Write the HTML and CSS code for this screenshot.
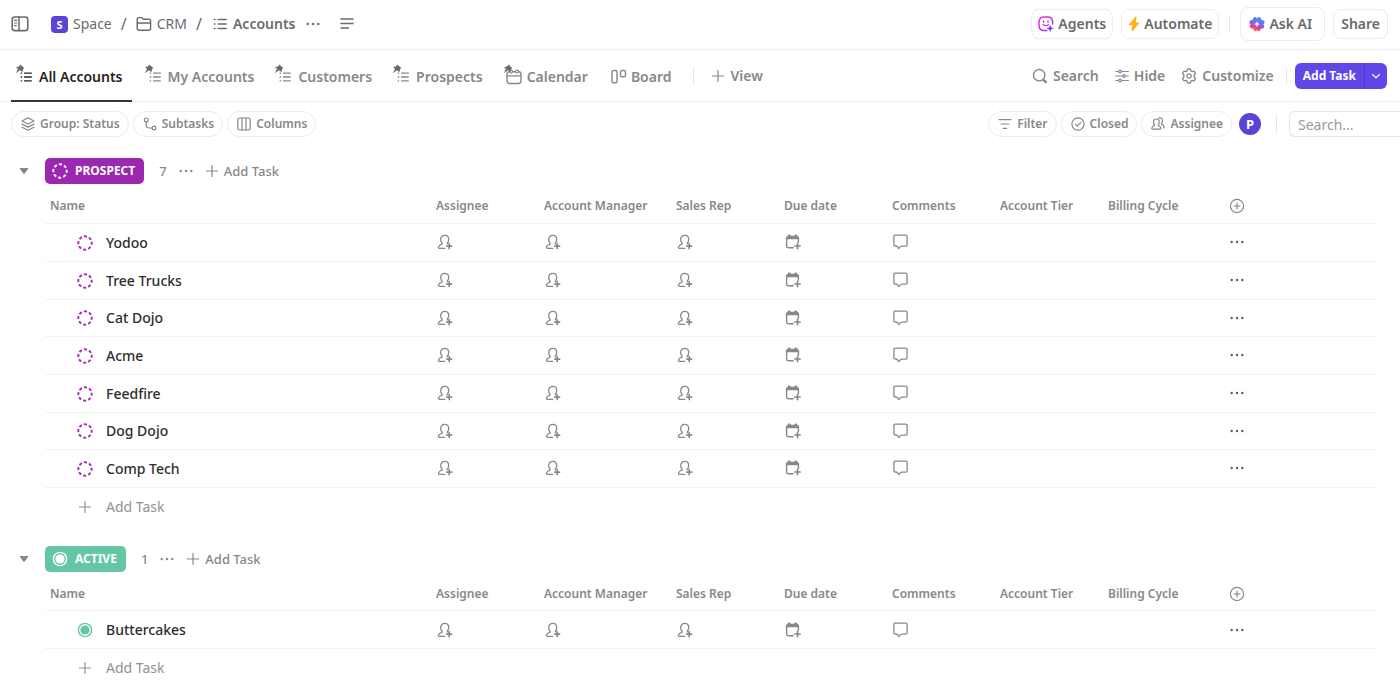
FILE: index.html
```html
<!DOCTYPE html>
<html lang="en">
<head>
<meta charset="utf-8">
<title>Accounts</title>
<link rel="stylesheet" href="styles.css">
</head>
<body>
<svg class="sprite" aria-hidden="true">
  <defs>
    <linearGradient id="agent-grad" x1="0" y1="0" x2="1" y2="1"><stop offset="0" stop-color="#fb2fd9"/><stop offset="1" stop-color="#8a35f0"/></linearGradient>
    <linearGradient id="ai-grad" x1="0.7" y1="0" x2="0.35" y2="1"><stop offset="0" stop-color="#2f9bff"/><stop offset="0.5" stop-color="#8a5cf0"/><stop offset="0.75" stop-color="#f2389a"/><stop offset="1" stop-color="#ff8a1f"/></linearGradient>
  </defs>
  <symbol id="list" viewBox="0 0 14 14"><path d="M5.200 2.500h8M5.200 7h8M5.200 11.500h8" stroke-width="1.500"/><path d="M1.300 2.500h.6M1.300 7h.6M1.300 11.500h.6" stroke-width="1.600"/></symbol>
  <symbol id="pin" viewBox="0 0 10 10"><path d="M5.400.6 9.400 4.200 8.100 5 7.500 8.200 5 6.300.8 9.200 3.100 4.800.9 3.400 4.200 2.300Z" fill="currentColor" stroke="none"/></symbol>
  <symbol id="dots" viewBox="0 0 14 4"><g fill="currentColor" stroke="none"><circle cx="1.700" cy="2" r="1.200"/><circle cx="7" cy="2" r="1.200"/><circle cx="12.300" cy="2" r="1.200"/></g></symbol>
  <symbol id="plus" viewBox="0 0 12 12"><path d="M6 .5v11M.5 6h11" stroke-width="1.200"/></symbol>
  <symbol id="person" viewBox="0 0 16 16"><path d="M7.700 14.300H2.500c-.9 0-1.300-.6-1-1.400.5-1.200 1.500-2 2.900-2.500.9-.3 1-.9.500-1.500-.8-1-1.200-2.200-1.200-3.500 0-2.400 1.700-4.100 4-4.100s4 1.700 4 4.100c0 1.200-.4 2.400-1.200 3.400-.3.400-.4.800-.2 1.100" stroke-width="1.300"/><path d="M12.200 9.700v4.800M9.800 12.100h4.800" stroke-width="1.700"/></symbol>
  <symbol id="date" viewBox="0 0 16 16"><path d="M.9 5.200V3.800c0-1 .7-1.600 1.600-1.600.2-1.300.9-1.700 1.700-1.700s1.400.4 1.700 1.200h3.200c.3-.8.900-1.200 1.700-1.200s1.500.4 1.700 1.700c1 0 1.600.600 1.600 1.600v1.400Z" fill="currentColor" stroke="none"/><path d="M1.600 4.500v7.600c0 1 .6 1.700 1.700 1.700h4.900M13.400 4.500v3.700" stroke-width="1.400"/><path d="M12.500 9.400v5.200M9.900 12h5.200" stroke-width="1.700"/></symbol>
  <symbol id="comment" viewBox="0 0 16 16"><path d="M2.200 1.200h10.600c.8 0 1.300.5 1.300 1.300v8.300c0 .8-.5 1.300-1.300 1.300H9c-1 .1-1.700.5-2.300 1.200l-1 1.300-.9-1.300c-.4-.7-.9-1.200-1.700-1.300h-.9c-.8 0-1.300-.5-1.300-1.300V2.500c0-.8.500-1.300 1.300-1.300Z" stroke-width="1.300"/></symbol>
  <symbol id="dashed" viewBox="0 0 16 16"><circle cx="8" cy="8" r="6.700" stroke-width="1.900" stroke-linecap="butt" stroke-dasharray="3.100 2.160" transform="rotate(-11 8 8)"/></symbol>
  <symbol id="active" viewBox="0 0 16 16"><circle cx="8" cy="8" r="6.600" stroke-width="1.400"/><circle cx="8" cy="8" r="4.600" fill="currentColor" stroke="none"/></symbol>
  <symbol id="caret" viewBox="0 0 10 8"><path d="M1.500 1h7c.7 0 .9.600.5 1.100L5.700 6.500c-.4.500-1 .500-1.400 0L1 2.100C.6 1.600.8 1 1.500 1Z" fill="currentColor" stroke="none"/></symbol>
  <symbol id="add-col" viewBox="0 0 16 16"><circle cx="8" cy="8" r="6.600"/><path d="M8 5v6M5 8h6"/></symbol>
</svg>

<div class="app">
  <header class="topbar">
    <nav class="crumbs" aria-label="Breadcrumb">
      <button class="plain panel-toggle" aria-label="Toggle sidebar"><svg class="i18" viewBox="0 0 18 18"><rect x="1.200" y="2" width="15.600" height="13.600" rx="2.600" stroke-width="1.600"/><path d="M8 2v13.600" stroke-width="1.500"/><path d="M3.500 5.300h2.300M3.500 8h2.300M3.500 10.700h1.600" stroke-width="1.200"/></svg></button>
      <a class="crumb" href="#"><span class="space-mark">S</span>Space</a>
      <span class="slash">/</span>
      <a class="crumb" href="#"><svg class="i16" viewBox="0 0 16 16"><path d="M1.200 12.300V3.500c0-1.200.7-1.900 1.900-1.900h2.300c.6 0 1 .2 1.300.7l.7 1h5.300c1.200 0 1.900.7 1.900 1.900v7.100c0 1.200-.7 1.900-1.900 1.900H3.100c-1.200 0-1.900-.7-1.900-1.900ZM1.400 7h13.200" stroke-width="1.400"/></svg>CRM</a>
      <span class="slash">/</span>
      <a class="crumb current" href="#" aria-current="page"><svg class="i14"><use href="#list"/></svg>Accounts</a>
      <button class="plain" aria-label="More"><svg class="dots"><use href="#dots"/></svg></button>
      <button class="plain outline" aria-label="Description"><svg class="i14" viewBox="0 0 14 14"><path d="M1 2.100h12M1 6.500h12M1 10.900h7.500" stroke-width="1.500"/></svg></button>
    </nav>
    <div class="actions">
      <button class="box"><svg class="i16" viewBox="0 0 16 16"><path d="M8.800 14.600H6C3 14.600 1 12.600 1 9.600V6c0-3 2-5 5-5h3.600c3 0 5 2 5 5v2" stroke="url(#agent-grad)" stroke-width="1.500"/><path d="M5.500 5v1.300M10 5v1.300M5 8.500c.8 1.400 4.800 1.400 5.600 0" stroke="#c631e4" stroke-width="1.300"/><path d="M12.200 8.800 13.200 11.300 15.800 12.400 13.200 13.400 12.200 16 11.100 13.400 8.500 12.400 11.100 11.300Z" fill="#8a35f0" stroke="none"/></svg>Agents</button>
      <button class="box"><svg class="bolt" viewBox="0 0 12 16"><path d="M7.400.8 1 8.300c-.4.500-.2 1 .5 1h2.700L3.600 14.500c-.1.800.5 1 1 .4L11 7.600c.4-.5.2-1-.5-1H8L8.500 1.200C8.600.4 7.900.2 7.400.8Z" fill="#ffb01f" stroke="none"/></svg>Automate</button>
      <span class="rule"></span>
      <button class="box ask"><svg class="i16" viewBox="0 0 16 16"><g fill="url(#ai-grad)" stroke="none"><path fill-rule="evenodd" d="M8 2.700C8.800.2 12.300.4 12.300 4 15.900 3.600 16.700 7 14.200 8.300 16.400 10.300 14.900 13.300 11.800 12.600 11.500 15.900 8.500 16 8 13.800 7.500 16 4.500 15.900 4.200 12.600 1.100 13.300-.4 10.300 1.800 8.300-.7 7 .1 3.600 3.700 4 3.700.4 7.200.2 8 2.700ZM8 4.700C7.500 7 7 7.500 4.700 8 7 8.500 7.500 9 8 11.300 8.500 9 9 8.500 11.300 8 9 7.500 8.500 7 8 4.700Z"/></g></svg>Ask AI</button>
      <button class="box share">Share</button>
    </div>
  </header>

  <div class="viewbar">
    <nav class="tabs" aria-label="Views">
      <a class="tab selected" href="#" aria-current="page"><span class="slot"><svg class="pin"><use href="#pin"/></svg><svg class="i12"><use href="#list"/></svg></span>All Accounts</a>
      <a class="tab" href="#"><span class="slot"><svg class="pin"><use href="#pin"/></svg><svg class="i12"><use href="#list"/></svg></span>My Accounts</a>
      <a class="tab" href="#"><span class="slot"><svg class="pin"><use href="#pin"/></svg><svg class="i12"><use href="#list"/></svg></span>Customers</a>
      <a class="tab" href="#"><span class="slot"><svg class="pin"><use href="#pin"/></svg><svg class="i12"><use href="#list"/></svg></span>Prospects</a>
      <a class="tab" href="#"><span class="slot calendar"><svg class="pin"><use href="#pin"/></svg><svg class="i16" viewBox="0 0 16 16"><rect x="1" y="2.800" width="14" height="11.700" rx="2.400" stroke-width="1.400"/><path d="M1 6.800h14"/><circle cx="5" cy="2.600" r="1.500" fill="#fff"/><circle cx="11" cy="2.600" r="1.500" fill="#fff"/></svg></span>Calendar</a>
      <a class="tab board" href="#"><svg class="i16" viewBox="0 0 16 16"><rect x="1" y="1.500" width="5" height="12.300" rx="1.600" stroke-width="1.400"/><rect x="9.500" y="1.500" width="5" height="6.300" rx="1.600" stroke-width="1.400"/></svg>Board</a>
      <span class="rule"></span>
      <button class="plain view-add"><svg class="i12"><use href="#plus"/></svg>View</button>
    </nav>
    <div class="tools">
      <button class="plain"><svg class="i16" viewBox="0 0 16 16"><circle cx="7.200" cy="7.200" r="5.700" stroke-width="1.400"/><path d="m12 12.500 1.800 1.500" stroke-width="2.400"/></svg>Search</button>
      <button class="plain"><svg class="i14" viewBox="0 0 14 14"><path d="M.8 2.500h2.600M6.600 2.500h6.700M.8 7h6.500M10.600 7h2.700M.8 11.500h2.600M6.600 11.500h6.700"/><circle cx="5" cy="2.500" r="1.300"/><circle cx="9" cy="7" r="1.300"/><circle cx="5" cy="11.500" r="1.300"/></svg>Hide</button>
      <button class="plain"><svg class="i16" viewBox="0 0 16 16"><path d="M6.600 1h2.800l.5 1.900 1.300.7 1.900-.5 1.400 2.400L13.100 7v2l1.400 1.500-1.400 2.400-1.900-.5-1.300.7-.5 1.900H6.600l-.5-1.900-1.300-.7-1.900.5-1.400-2.400L2.900 9V7L1.500 5.500l1.400-2.400 1.900.5 1.300-.7Z" stroke-width="1.300"/><circle cx="8" cy="8" r="2.200"/></svg>Customize</button>
      <span class="rule"></span>
      <div class="split"><button class="primary">Add Task</button><button class="primary more" aria-label="More task types"><svg class="i10" viewBox="0 0 10 10"><path d="m1.500 3.500 3.500 3.300 3.500-3.300"/></svg></button></div>
    </div>
  </div>

  <div class="filterbar">
    <div class="pills">
      <button class="pill"><svg class="i14" viewBox="0 0 14 14"><path d="M7 .8 13 4 7 7 1 4ZM1 7.100l6 3 6-3M1 10.200l6 3 6-3"/></svg>Group: Status</button>
      <button class="pill"><svg class="i14" viewBox="0 0 14 14"><circle cx="3.200" cy="2.900" r="1.900"/><circle cx="11" cy="11" r="1.900"/><path d="M3.200 5v2.800c0 2 1.200 3.200 3.200 3.200H9"/></svg>Subtasks</button>
      <button class="pill"><svg class="i14" viewBox="0 0 14 14"><rect x=".8" y="1" width="12.400" height="12" rx="2.200"/><path d="M5 1v12M9 1v12"/></svg>Columns</button>
    </div>
    <div class="pills">
      <button class="pill"><svg class="i14" viewBox="0 0 14 14"><path d="M1 2.600h12M3 7h8M5.400 11.400h3.200"/></svg>Filter</button>
      <button class="pill"><svg class="i14" viewBox="0 0 14 14"><circle cx="7" cy="7" r="6.100"/><path d="m4.300 7.200 1.900 1.900L9.800 5.300"/></svg>Closed</button>
      <button class="pill"><svg class="i14" viewBox="0 0 14 14"><path d="M5.400 2C7.400 2 8.300 3.400 8.300 5c0 1-.4 1.900-1 2.700-.3.400-.2.800.3.900 1.200.4 2.100 1.300 2.300 2.600.1.500-.2.900-.7.900H1.500c-.5 0-.8-.4-.7-.9.300-1.300 1.200-2.200 2.400-2.600.5-.1.600-.5.300-.9-.7-.8-1-1.700-1-2.700 0-1.600.9-3 2.900-3Z"/><path d="M7.500 1C10 .2 11.500 1.700 11.500 3.900c0 1-.3 1.800-.9 2.600-.3.400-.2.700.2.900 1.100.4 2 1.300 2.300 2.500.1.500-.2.900-.7.900"/></svg>Assignee</button>
      <button class="avatar" aria-label="P">P</button>
      <span class="rule"></span>
      <input class="search" type="search" placeholder="Search..." aria-label="Search tasks">
    </div>
  </div>

  <main class="groups">
    <section class="group">
      <div class="group-head">
        <button class="plain fold" aria-label="Collapse Prospect"><svg class="i10"><use href="#caret"/></svg></button>
        <button class="status prospect"><svg class="i16"><use href="#dashed"/></svg>PROSPECT</button>
        <span class="count">7</span>
        <button class="plain" aria-label="Group menu"><svg class="dots"><use href="#dots"/></svg></button>
        <button class="plain head-add"><svg class="i12"><use href="#plus"/></svg>Add Task</button>
      </div>
      <table class="tasks">
        <colgroup><col class="c-name"><col class="c-std"><col class="c-wide"><col class="c-std"><col class="c-std"><col class="c-std"><col class="c-std"><col class="c-std"><col class="c-menu"><col></colgroup>
        <thead><tr><th>Name</th><th>Assignee</th><th>Account Manager</th><th>Sales Rep</th><th>Due date</th><th>Comments</th><th>Account Tier</th><th>Billing Cycle</th><th class="menu"><button class="plain" aria-label="Add column"><svg class="i16"><use href="#add-col"/></svg></button></th><th></th></tr></thead>
        <tbody>
          <tr><td><a class="task prospect-mark" href="#"><svg class="i16"><use href="#dashed"/></svg>Yodoo</a></td><td><svg class="i16"><use href="#person"/></svg></td><td><svg class="i16"><use href="#person"/></svg></td><td><svg class="i16"><use href="#person"/></svg></td><td><svg class="i16"><use href="#date"/></svg></td><td><svg class="i16"><use href="#comment"/></svg></td><td></td><td></td><td class="menu"><button class="plain" aria-label="Task menu"><svg class="dots"><use href="#dots"/></svg></button></td><td></td></tr>
          <tr><td><a class="task prospect-mark" href="#"><svg class="i16"><use href="#dashed"/></svg>Tree Trucks</a></td><td><svg class="i16"><use href="#person"/></svg></td><td><svg class="i16"><use href="#person"/></svg></td><td><svg class="i16"><use href="#person"/></svg></td><td><svg class="i16"><use href="#date"/></svg></td><td><svg class="i16"><use href="#comment"/></svg></td><td></td><td></td><td class="menu"><button class="plain" aria-label="Task menu"><svg class="dots"><use href="#dots"/></svg></button></td><td></td></tr>
          <tr><td><a class="task prospect-mark" href="#"><svg class="i16"><use href="#dashed"/></svg>Cat Dojo</a></td><td><svg class="i16"><use href="#person"/></svg></td><td><svg class="i16"><use href="#person"/></svg></td><td><svg class="i16"><use href="#person"/></svg></td><td><svg class="i16"><use href="#date"/></svg></td><td><svg class="i16"><use href="#comment"/></svg></td><td></td><td></td><td class="menu"><button class="plain" aria-label="Task menu"><svg class="dots"><use href="#dots"/></svg></button></td><td></td></tr>
          <tr><td><a class="task prospect-mark" href="#"><svg class="i16"><use href="#dashed"/></svg>Acme</a></td><td><svg class="i16"><use href="#person"/></svg></td><td><svg class="i16"><use href="#person"/></svg></td><td><svg class="i16"><use href="#person"/></svg></td><td><svg class="i16"><use href="#date"/></svg></td><td><svg class="i16"><use href="#comment"/></svg></td><td></td><td></td><td class="menu"><button class="plain" aria-label="Task menu"><svg class="dots"><use href="#dots"/></svg></button></td><td></td></tr>
          <tr><td><a class="task prospect-mark" href="#"><svg class="i16"><use href="#dashed"/></svg>Feedfire</a></td><td><svg class="i16"><use href="#person"/></svg></td><td><svg class="i16"><use href="#person"/></svg></td><td><svg class="i16"><use href="#person"/></svg></td><td><svg class="i16"><use href="#date"/></svg></td><td><svg class="i16"><use href="#comment"/></svg></td><td></td><td></td><td class="menu"><button class="plain" aria-label="Task menu"><svg class="dots"><use href="#dots"/></svg></button></td><td></td></tr>
          <tr><td><a class="task prospect-mark" href="#"><svg class="i16"><use href="#dashed"/></svg>Dog Dojo</a></td><td><svg class="i16"><use href="#person"/></svg></td><td><svg class="i16"><use href="#person"/></svg></td><td><svg class="i16"><use href="#person"/></svg></td><td><svg class="i16"><use href="#date"/></svg></td><td><svg class="i16"><use href="#comment"/></svg></td><td></td><td></td><td class="menu"><button class="plain" aria-label="Task menu"><svg class="dots"><use href="#dots"/></svg></button></td><td></td></tr>
          <tr><td><a class="task prospect-mark" href="#"><svg class="i16"><use href="#dashed"/></svg>Comp Tech</a></td><td><svg class="i16"><use href="#person"/></svg></td><td><svg class="i16"><use href="#person"/></svg></td><td><svg class="i16"><use href="#person"/></svg></td><td><svg class="i16"><use href="#date"/></svg></td><td><svg class="i16"><use href="#comment"/></svg></td><td></td><td></td><td class="menu"><button class="plain" aria-label="Task menu"><svg class="dots"><use href="#dots"/></svg></button></td><td></td></tr>
        </tbody>
      </table>
      <button class="plain row-add"><svg class="i12"><use href="#plus"/></svg>Add Task</button>
    </section>

    <section class="group">
      <div class="group-head">
        <button class="plain fold" aria-label="Collapse Active"><svg class="i10"><use href="#caret"/></svg></button>
        <button class="status active"><svg class="i16"><use href="#active"/></svg>ACTIVE</button>
        <span class="count">1</span>
        <button class="plain" aria-label="Group menu"><svg class="dots"><use href="#dots"/></svg></button>
        <button class="plain head-add"><svg class="i12"><use href="#plus"/></svg>Add Task</button>
      </div>
      <table class="tasks">
        <colgroup><col class="c-name"><col class="c-std"><col class="c-wide"><col class="c-std"><col class="c-std"><col class="c-std"><col class="c-std"><col class="c-std"><col class="c-menu"><col></colgroup>
        <thead><tr><th>Name</th><th>Assignee</th><th>Account Manager</th><th>Sales Rep</th><th>Due date</th><th>Comments</th><th>Account Tier</th><th>Billing Cycle</th><th class="menu"><button class="plain" aria-label="Add column"><svg class="i16"><use href="#add-col"/></svg></button></th><th></th></tr></thead>
        <tbody>
          <tr><td><a class="task active-mark" href="#"><svg class="i16"><use href="#active"/></svg>Buttercakes</a></td><td><svg class="i16"><use href="#person"/></svg></td><td><svg class="i16"><use href="#person"/></svg></td><td><svg class="i16"><use href="#person"/></svg></td><td><svg class="i16"><use href="#date"/></svg></td><td><svg class="i16"><use href="#comment"/></svg></td><td></td><td></td><td class="menu"><button class="plain" aria-label="Task menu"><svg class="dots"><use href="#dots"/></svg></button></td><td></td></tr>
        </tbody>
      </table>
      <button class="plain row-add"><svg class="i12"><use href="#plus"/></svg>Add Task</button>
    </section>
  </main>
</div>
</body>
</html>
```
FILE: styles.css
```css
* { box-sizing: border-box; }

body {
  margin: 0;
  background: #fff;
  color: #888;
  font: 500 14px/20px "Noto Sans", "Open Sans", sans-serif;
}

a { color: inherit; text-decoration: none; }

button, input { font: inherit; color: inherit; }

button {
  display: flex;
  align-items: center;
  margin: 0;
  padding: 0;
  border: 0;
  background: none;
  white-space: nowrap;
}

svg {
  display: block;
  flex: none;
  fill: none;
  stroke: currentColor;
  stroke-width: 1.2;
  stroke-linecap: round;
  stroke-linejoin: round;
}

.sprite { position: absolute; width: 0; height: 0; }
.i10 { width: 10px; height: 10px; }
.i12 { width: 12px; height: 12px; }
.i14 { width: 14px; height: 14px; }
.i16 { width: 16px; height: 16px; }
.i18 { width: 18px; height: 18px; }
.dots { width: 14px; height: 4px; }
.pin { width: 10px; height: 10px; }
.bolt { width: 12px; height: 16px; }

.rule { width: 1px; height: 16px; background: #e4e4e4; }

.app {
  display: flex;
  flex-direction: column;
  height: 100vh;
  overflow: hidden;
}

.topbar, .viewbar, .filterbar {
  display: flex;
  align-items: center;
  justify-content: space-between;
  flex: none;
}

/* Top bar */
.topbar {
  height: 50px;
  padding: 0 12px 1px 11px;
  border-bottom: 1px solid #ececec;
  color: #6b6b6b;
}

.crumbs, .actions { display: flex; align-items: center; gap: 8px; }
.panel-toggle { margin-right: 14px; }
.crumb { display: flex; align-items: center; gap: 5px; font-weight: 400; }
.crumb.current { gap: 6px; font-weight: 600; margin-left: 2px; }
.slash { font-size: 16px; font-weight: 400; padding: 0 1px; }
.crumbs .dots { margin: 0 2px; }
.outline { margin-left: 10px; }

.space-mark {
  width: 17px;
  height: 17px;
  border-radius: 4px;
  background: #5a43d6;
  color: #fff;
  font-size: 11px;
  font-weight: 700;
  line-height: 17px;
  text-align: center;
}

.box {
  gap: 4px;
  height: 30px;
  padding: 0 6px;
  border: 1px solid #ececec;
  border-radius: 8px;
  font-weight: 600;
}
.share { padding: 0 7px; }
.actions .rule { margin: 0 2px; }
.ask { height: 34px; padding: 0 12px 0 8px; }

/* Views */
.viewbar {
  height: 52px;
  padding: 0 13px 0 11px;
  border-bottom: 1px solid #ececec;
  font-weight: 600;
}

.tabs, .tools { display: flex; align-items: center; align-self: stretch; }
.tabs { gap: 8px; }

.tab {
  display: flex;
  align-items: center;
  align-self: stretch;
  margin-bottom: -1px;
  padding: 3px 8px 0 4px;
  border-bottom: 2px solid transparent;
  white-space: nowrap;
}
.tab.selected { padding-right: 9px; border-color: #35353b; color: #242424; }
.slot { position: relative; width: 24px; padding-left: 5px; }
.slot.calendar { padding-left: 3px; }
.slot .pin { position: absolute; left: 0; top: -7px; color: #6b6b6b; }
.slot.calendar .pin { top: -5px; }
.board { gap: 4px; padding-left: 7px; }
.tabs .rule { margin: 0 10px 0 5px; }
.view-add { gap: 7px; }

.tools { gap: 16px; }
.tools .plain { gap: 5px; }
.tools .rule { margin: 0 -8px 0 -4px; }

.split { display: flex; }
.primary {
  height: 26px;
  padding: 0 8px;
  border-radius: 6px 0 0 6px;
  background: #6047e8;
  color: #fff;
  font-size: 12px;
  font-weight: 700;
}
.primary.more {
  padding: 0 6px;
  border-left: 1px solid #5039cc;
  border-radius: 0 6px 6px 0;
}

/* Filters */
.filterbar { padding: 9px 0 8px 11px; font-size: 12px; font-weight: 600; }
.pills { display: flex; align-items: center; gap: 4px; }
.pill {
  gap: 5px;
  height: 26px;
  padding: 0 8px 0 9px;
  border: 1px solid #ececec;
  border-radius: 13px;
}
.avatar {
  justify-content: center;
  width: 22px;
  height: 22px;
  margin: 0 3px;
  border-radius: 50%;
  background: #5a43d6;
  color: #fff;
  font-size: 13px;
  font-weight: 700;
}
.filterbar .rule { margin: 0 8px; }
.search {
  width: 111px;
  height: 26px;
  padding: 0 8px;
  border: 1px solid #e4e4e4;
  border-right: 0;
  border-radius: 6px 0 0 6px;
  background: #fff;
  font-weight: 400;
  font-size: 14px;
}
.search::placeholder { color: #9a9a9a; opacity: 1; }

/* Groups */
.groups {
  display: flex;
  flex-direction: column;
  gap: 20px;
  padding: 13px 23px 0 19px;
}

.group-head { display: flex; align-items: center; font-size: 13px; }
.fold { width: 26px; }

.status {
  gap: 7px;
  height: 26px;
  margin-right: 15px;
  padding: 0 9px 0 7px;
  border-radius: 5px;
  color: #fff;
  font-size: 12px;
  font-weight: 700;
}
.status.prospect { background: #9c27b0; }
.status.active { background: #65c6a3; }
.count { margin-right: 12px; }
.head-add { gap: 6px; margin-left: 13px; }

.tasks {
  width: calc(100% - 26px);
  margin-left: 26px;
  border-collapse: collapse;
  table-layout: fixed;
}
.c-name { width: 391px; }
.c-std { width: 108px; }
.c-wide { width: 132px; }
.c-menu { width: 42px; }

.tasks tr { height: 38px; border-bottom: 1px solid #f1f1f1; }
.tasks tbody tr:nth-child(3n) { height: 37px; }
.tasks thead tr { height: 39px; }
.tasks th {
  padding: 6px 0 0;
  font-size: 12px;
  font-weight: 600;
  text-align: left;
  white-space: nowrap;
}
.tasks th:first-child { padding-left: 5px; }
.tasks td { padding: 0 0 0 1px; }
.tasks td:first-child { padding: 1px 0 0; }
.tasks .menu { padding-left: 0; }
.tasks .menu button { margin: 0 auto; }
.tasks td.menu { color: #5c5c5c; }

.task {
  display: flex;
  align-items: center;
  gap: 13px;
  padding-left: 32px;
  color: #2e2e2e;
}
.prospect-mark svg { color: #a02bb5; }
.active-mark svg { color: #65c6a3; }

.row-add {
  gap: 15px;
  height: 38px;
  padding-left: 60px;
  color: #929292;
  font-weight: 400;
}
```
